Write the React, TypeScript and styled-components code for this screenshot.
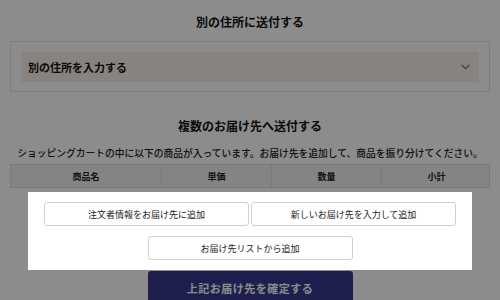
import * as React from 'react';
import styled, { createGlobalStyle } from 'styled-components';

const GlobalStyle = createGlobalStyle`
  html, body {
    margin: 0;
    padding: 0;
    background: #ffffff;
    width: 500px;
    height: 300px;
    overflow: hidden;
  }
  body {
    font-family: "Noto Sans CJK JP", "Noto Sans", sans-serif;
    color: #111;
  }
`;

const Page = styled.div`
  position: relative;
  width: 500px;
  height: 300px;
  padding: 0 10px;
  box-sizing: border-box;
  display: flex;
  flex-direction: column;
  & > * {
    flex-shrink: 0;
  }
`;

interface TitleProps {
  spaceTop: number;
  spaceBottom: number;
}

const Title = styled.h2`
  margin: ${(props: TitleProps) => props.spaceTop}px 0
    ${(props: TitleProps) => props.spaceBottom}px;
  font-size: 12px;
  line-height: 16px;
  font-weight: 700;
  text-align: center;
  color: #111;
`;

const AddressBox = styled.div`
  border: 1px solid #e6e6e6;
  padding: 10px 10px 9px;
`;

const Select = styled.div`
  height: 30px;
  background: #f7efe9;
  display: flex;
  align-items: center;
  justify-content: space-between;
  padding: 0 9px 0 7px;
  font-size: 11px;
  font-weight: 700;
  color: #111;
`;

const Chevron = () => (
  <svg width="9" height="6" viewBox="0 0 9 6">
    <path d="M0.7 0.8 L4.5 4.6 L8.3 0.8" fill="none" stroke="#666" strokeWidth="1.2" />
  </svg>
);

const Lead = styled.p`
  margin: 12px 0 4px;
  font-size: 9.75px;
  line-height: 14px;
  font-weight: 500;
  text-align: center;
  white-space: nowrap;
  color: #222;
`;

const HeaderRow = styled.div`
  display: grid;
  grid-template-columns: 150px 110px 110px 110px;
  height: 24px;
  background: #f1f1f1;
  border: 1px solid #dcdcdc;
  box-sizing: border-box;
`;

const HeaderCell = styled.div`
  display: flex;
  align-items: center;
  justify-content: center;
  font-size: 9px;
  font-weight: 700;
  color: #222;
  & + & {
    border-left: 1px solid #dcdcdc;
  }
`;

const Highlight = styled.div`
  position: relative;
  z-index: 2;
  margin: 4px 18px 0 18px;
  background: #ffffff;
  padding: 10px 16px;
  display: grid;
  grid-template-columns: 1fr 1fr;
  column-gap: 2px;
  row-gap: 10px;
  justify-items: center;
`;

interface ActionProps {
  wide?: boolean;
}

const Action = styled.button`
  grid-column: ${(props: ActionProps) => (props.wide ? '1 / span 2' : 'auto')};
  width: 205px;
  height: 24px;
  background: #fff;
  border: 1px solid #cfcfcf;
  border-radius: 3px;
  font-family: "Noto Sans CJK JP", "Noto Sans", sans-serif;
  font-size: 9px;
  color: #222;
  padding: 0;
  cursor: pointer;
`;

const Confirm = styled.button`
  align-self: center;
  margin-top: 1px;
  width: 205px;
  height: 40px;
  background: #383a8e;
  border: none;
  border-radius: 3px 3px 0 0;
  color: #fff;
  font-family: "Noto Sans CJK JP", "Noto Sans", sans-serif;
  font-size: 11px;
  font-weight: 700;
  letter-spacing: 0.5px;
  padding: 0 0 6px;
`;

const Overlay = styled.div`
  position: fixed;
  inset: 0;
  background: rgba(0, 0, 0, 0.45);
  z-index: 1;
`;

const columns = ['商品名', '単価', '数量', '小計'];

export default function App() {
  return (
    <>
      <GlobalStyle />
      <Page>
        <Title spaceTop={14} spaceBottom={11}>別の住所に送付する</Title>
        <AddressBox>
          <Select>
            別の住所を入力する
            <Chevron />
          </Select>
        </AddressBox>
        <Title spaceTop={26} spaceBottom={0}>複数のお届け先へ送付する</Title>
        <Lead>
          ショッピングカートの中に以下の商品が入っています。お届け先を追加して、商品を振り分けてください。
        </Lead>
        <HeaderRow>
          {columns.map(label => (
            <HeaderCell key={label}>{label}</HeaderCell>
          ))}
        </HeaderRow>
        <Highlight>
          <Action>注文者情報をお届け先に追加</Action>
          <Action>新しいお届け先を入力して追加</Action>
          <Action wide>お届け先リストから追加</Action>
        </Highlight>
        <Confirm>上記お届け先を確定する</Confirm>
        <Overlay />
      </Page>
    </>
  );
}
